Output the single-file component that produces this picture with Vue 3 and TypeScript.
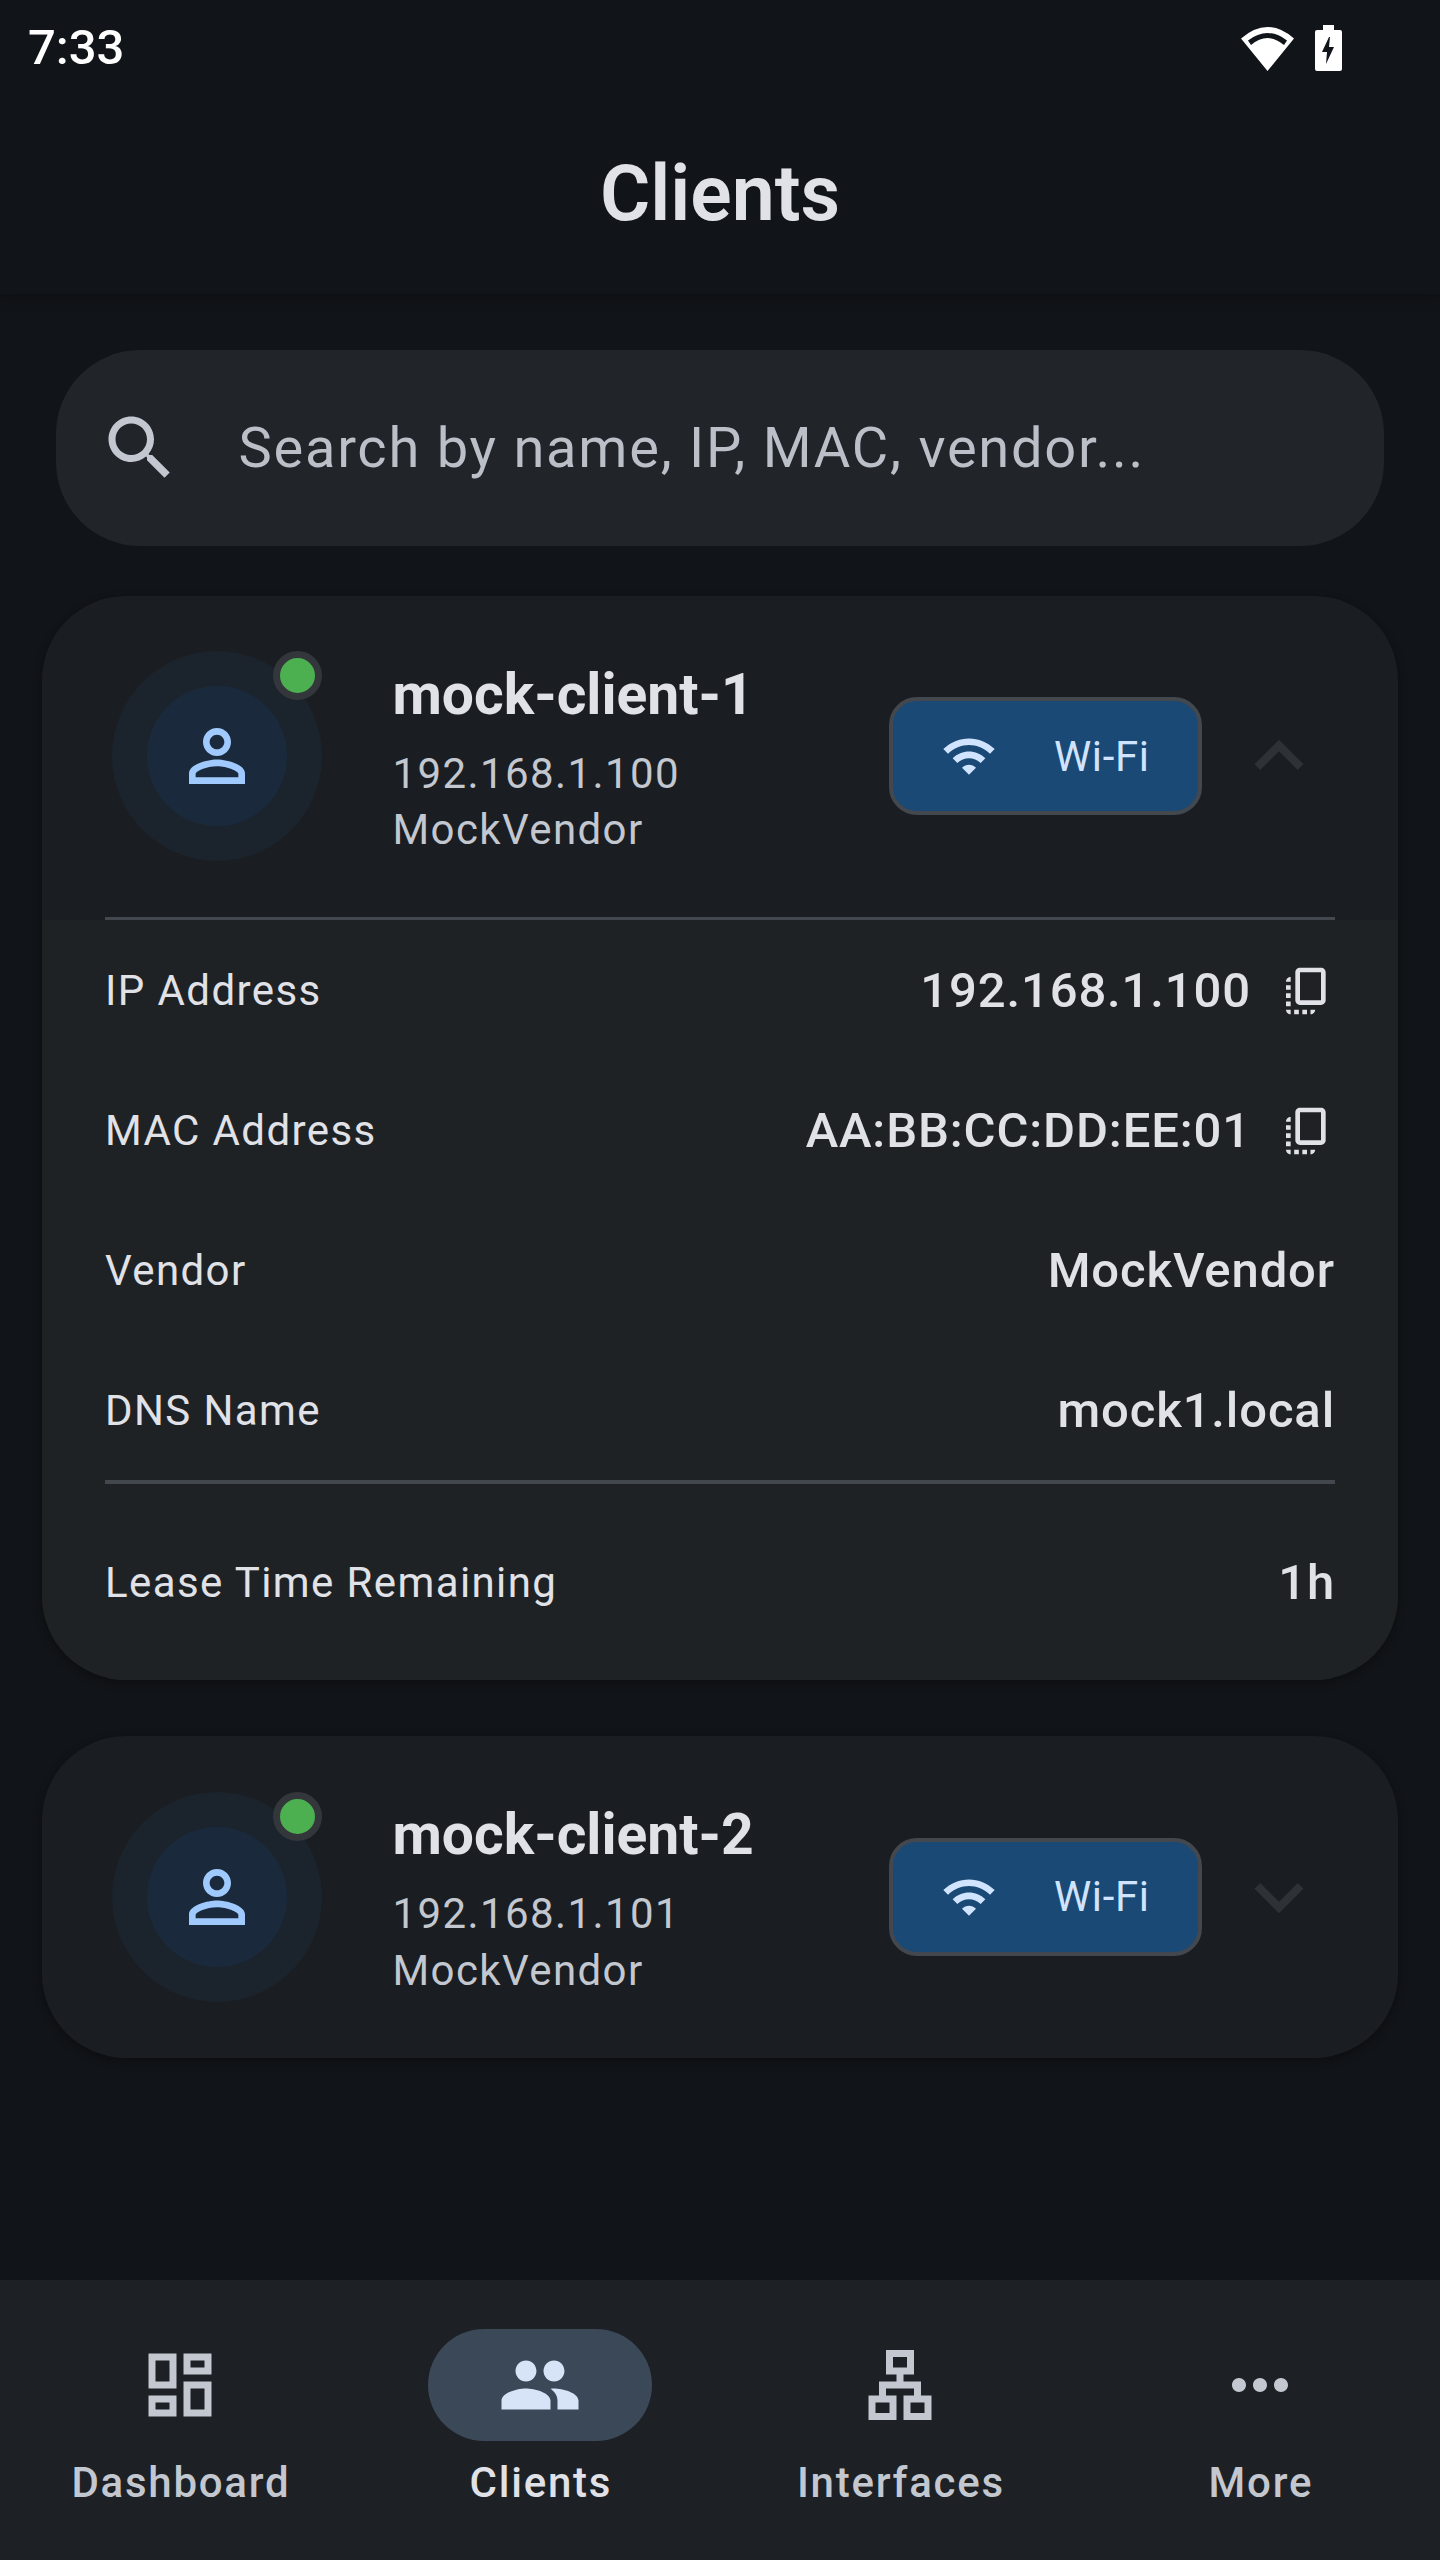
<script setup lang="ts">
import { ref } from 'vue'

interface Client {
  name: string
  ip: string
  vendor: string
  mac: string
  dns: string
  lease: string
}

const clients = ref<Client[]>([
  { name: 'mock-client-1', ip: '192.168.1.100', vendor: 'MockVendor', mac: 'AA:BB:CC:DD:EE:01', dns: 'mock1.local', lease: '1h' },
  { name: 'mock-client-2', ip: '192.168.1.101', vendor: 'MockVendor', mac: 'AA:BB:CC:DD:EE:02', dns: 'mock2.local', lease: '2h' }
])
const opened = ref(0)

const toggle = (index: number) => {
  opened.value = opened.value === index ? -1 : index
}

const tabs = [
  { label: 'Dashboard', icon: 'M19 5v2h-4V5h4M9 5v6H5V5h4m10 8v6h-4v-6h4M9 17v2H5v-2h4M21 3h-8v6h8V3zM11 3H3v10h8V3zm10 8h-8v10h8V11zm-10 4H3v6h8v-6z' },
  { label: 'Clients', icon: 'M16 11c1.66 0 2.99-1.34 2.99-3S17.66 5 16 5c-1.66 0-3 1.34-3 3s1.34 3 3 3zm-8 0c1.66 0 2.99-1.34 2.99-3S9.66 5 8 5C6.34 5 5 6.34 5 8s1.34 3 3 3zm0 2c-2.33 0-7 1.17-7 3.5V19h14v-2.5c0-2.33-4.67-3.5-7-3.5zm8 0c-.29 0-.62.02-.97.05 1.16.84 1.97 1.97 1.97 3.45V19h6v-2.5c0-2.33-4.67-3.5-7-3.5z' },
  { label: 'Interfaces', icon: 'M13 22h8v-7h-3v-4h-5V9h3V2H8v7h3v2H6v4H3v7h8v-7H8v-2h8v2h-3v7zM10 7V4h4v3h-4zM5 20v-3h4v3H5zm14 0h-4v-3h4v3z' },
  { label: 'More', icon: 'M6 10c-1.1 0-2 .9-2 2s.9 2 2 2 2-.9 2-2-.9-2-2-2zm12 0c-1.1 0-2 .9-2 2s.9 2 2 2 2-.9 2-2-.9-2-2-2zm-6 0c-1.1 0-2 .9-2 2s.9 2 2 2 2-.9 2-2-.9-2-2-2z' }
]
const activeTab = ref(1)

const copyPath = 'M18 2H9C7.9 2 7 2.9 7 4v12c0 1.1.9 2 2 2h9c1.1 0 2-.9 2-2V4C20 2.9 19.1 2 18 2zM18 16H9V4h9V16zM3 15v-2h2v2H3zM3 9.5h2v2H3V9.5zM10 20h2v2h-2V20zM3 18.5v-2h2v2H3zM5 22c-1.1 0-2-.9-2-2h2V22zM8.5 22h-2v-2h2V22zM13.5 22L13.5 22l0-2h2v0C15.5 21.1 14.6 22 13.5 22zM5 6L5 6l0 2h0H3v0C3 6.9 3.9 6 5 6z'
</script>

<template>
  <div class="screen">
    <header class="appbar">
      <div class="status">
        <span class="time">7:33</span>
        <div class="status-icons">
          <svg class="st-wifi" viewBox="0 0 53 44">
            <path fill="#fff" fill-rule="evenodd" d="M26.5 44 0 11.5Q26.5-11.5 53 11.5ZM7 13.5 10 18Q26.5 4 43 18L46 13.5Q26.5-1.500 7 13.5Z" />
          </svg>
          <svg class="st-batt" viewBox="0 0 27 46">
            <path fill="#fff" fill-rule="evenodd" d="M7 0h12v5h6a2 2 0 0 1 2 2v37a2 2 0 0 1-2 2H2a2 2 0 0 1-2-2V7a2 2 0 0 1 2-2h6V0ZM14 12 7 27h5l-1 12 8-17h-5l1-10Z" />
          </svg>
        </div>
      </div>
      <h1 class="title">Clients</h1>
    </header>

    <div class="search">
      <svg class="search-icon" viewBox="0 0 24 24">
        <path d="M15.500 14h-.79l-.28-.27C15.410 12.590 16 11.110 16 9.500 16 5.910 13.090 3 9.500 3S3 5.910 3 9.500 5.910 16 9.500 16c1.610 0 3.090-.59 4.230-1.570l.27.28v.79l5 4.990L20.490 19l-4.990-5zm-6 0C7.010 14 5 11.990 5 9.500S7.010 5 9.500 5 14 7.010 14 9.500 11.990 14 9.500 14z" />
      </svg>
      <span class="placeholder">Search by name, IP, MAC, vendor...</span>
    </div>

    <main class="list">
      <section v-for="(client, index) in clients" :key="client.name" class="card">
        <div class="card-head" :class="{ open: opened === index }" @click="toggle(index)">
          <div class="avatar">
            <div class="avatar-inner">
              <svg viewBox="0 0 24 24">
                <path d="M12 5.900c1.160 0 2.100.94 2.100 2.100s-.94 2.100-2.100 2.100S9.900 9.160 9.900 8s.94-2.100 2.100-2.100m0 9c2.970 0 6.100 1.460 6.100 2.100v1.100H5.900V17c0-.64 3.130-2.100 6.100-2.100M12 4C9.790 4 8 5.790 8 8s1.790 4 4 4 4-1.790 4-4-1.790-4-4-4zm0 9c-2.670 0-8 1.340-8 4v3h16v-3c0-2.660-5.330-4-8-4z" />
              </svg>
            </div>
            <span class="online"></span>
          </div>
          <div class="info">
            <div class="name">{{ client.name }}</div>
            <div class="sub">{{ client.ip }}</div>
            <div class="sub">{{ client.vendor }}</div>
          </div>
          <div class="chip">
            <svg viewBox="0 0 24 24">
              <path d="M1 9l2 2c4.970-4.970 13.030-4.970 18 0l2-2C16.930 2.930 7.080 2.930 1 9zm8 8l3 3 3-3c-1.650-1.660-4.340-1.660-6 0zm-4-4l2 2c2.760-2.760 7.240-2.760 10 0l2-2C15.140 9.140 8.870 9.140 5 13z" />
            </svg>
            <span>Wi-Fi</span>
          </div>
          <svg class="chevron" viewBox="0 0 24 24">
            <path v-if="opened === index" d="M12 8l-6 6 1.410 1.410L12 10.830l4.590 4.580L18 14z" />
            <path v-else d="M16.590 8.590L12 13.170 7.410 8.590 6 10l6 6 6-6z" />
          </svg>
        </div>
        <div v-if="opened === index" class="rule"></div>
        <div v-if="opened === index" class="details">
          <div class="row">
            <span class="label">IP Address</span>
            <div class="value-wrap">
              <span class="value">{{ client.ip }}</span>
              <svg class="copy" viewBox="0 0 24 24"><path :d="copyPath" /></svg>
            </div>
          </div>
          <div class="row">
            <span class="label">MAC Address</span>
            <div class="value-wrap">
              <span class="value">{{ client.mac }}</span>
              <svg class="copy" viewBox="0 0 24 24"><path :d="copyPath" /></svg>
            </div>
          </div>
          <div class="row">
            <span class="label">Vendor</span>
            <span class="value">{{ client.vendor }}</span>
          </div>
          <div class="row">
            <span class="label">DNS Name</span>
            <span class="value">{{ client.dns }}</span>
          </div>
          <div class="rule rule-inner"></div>
          <div class="row">
            <span class="label">Lease Time Remaining</span>
            <span class="value">{{ client.lease }}</span>
          </div>
        </div>
      </section>
    </main>

    <nav class="nav">
      <div v-for="(tab, index) in tabs" :key="tab.label" class="tab" :class="{ active: activeTab === index }" @click="activeTab = index">
        <div class="pill">
          <svg viewBox="0 0 24 24"><path :d="tab.icon" /></svg>
        </div>
        <span class="tab-label">{{ tab.label }}</span>
      </div>
    </nav>
  </div>
</template>

<style>
html, body {
  margin: 0;
  background: #111418;
}
</style>

<style scoped>
* {
  box-sizing: border-box;
}
.screen {
  width: 1440px;
  height: 2560px;
  display: flex;
  flex-direction: column;
  background: #111418;
  font-family: Roboto, "Liberation Sans", sans-serif;
  color: #e1e2e8;
}
.appbar {
  height: 294px;
  flex: none;
  box-shadow: 0 4px 14px rgba(0, 0, 0, 0.22);
}
.status {
  height: 84px;
  padding: 0 98px 0 28px;
  display: flex;
  align-items: center;
  justify-content: space-between;
}
.time {
  font-size: 49px;
  font-weight: 500;
  line-height: 56px;
  color: #fff;
  margin-top: 12px;
}
.status-icons {
  display: flex;
  gap: 21px;
  align-items: flex-start;
  margin-top: 12px;
  align-self: flex-start;
}
.st-wifi {
  width: 53px;
  height: 44px;
  margin-top: 15px;
}
.st-batt {
  width: 27px;
  height: 46px;
  margin-top: 13px;
}
.title {
  margin: 0;
  height: 210px;
  padding-top: 5px;
  line-height: 210px;
  text-align: center;
  font-size: 77px;
  font-weight: 600;
}
.search {
  height: 196px;
  margin: 56px 56px 0;
  padding-left: 42px;
  border-radius: 84px;
  background: #212429;
  display: flex;
  align-items: center;
  flex: none;
}
.search-icon {
  width: 84px;
  height: 84px;
  fill: #c3c7cf;
  margin-right: 56.5px;
}
.placeholder {
  font-size: 56px;
  letter-spacing: 1.75px;
  color: #bbbfc8;
}
.list {
  flex: 1;
  padding: 50px 42px 0;
  display: flex;
  flex-direction: column;
  gap: 56px;
}
.card {
  border-radius: 84px;
  background: #1a1d21;
  overflow: hidden;
  box-shadow: 0 3px 10px rgba(0, 0, 0, 0.3);
}
.card-head {
  height: 322.5px;
  padding: 0 70px;
  display: flex;
  align-items: center;
}
.card-head.open {
  height: 320.5px;
}
.avatar {
  position: relative;
  width: 210px;
  height: 210px;
  flex: none;
  border-radius: 50%;
  background: #1b242c;
  display: flex;
  align-items: center;
  justify-content: center;
}
.avatar-inner {
  width: 140px;
  height: 140px;
  border-radius: 50%;
  background: #1a2a3c;
  display: flex;
  align-items: center;
  justify-content: center;
}
.avatar-inner svg {
  width: 84px;
  height: 84px;
  fill: #a0cafd;
}
.online {
  position: absolute;
  top: 0;
  right: 0;
  width: 49px;
  height: 49px;
  border-radius: 50%;
  background: #4caf50;
  border: 7px solid #33363b;
}
.info {
  flex: 1;
  min-width: 0;
  margin-left: 70.5px;
  padding-bottom: 11px;
}
.name {
  font-size: 57px;
  line-height: 103px;
  font-weight: 700;
}
.sub {
  font-size: 42px;
  line-height: 56.5px;
  letter-spacing: 1.4px;
  color: #c3c7cf;
}
.chip {
  width: 313px;
  height: 118px;
  flex: none;
  margin-right: 28px;
  border: 4px solid #43474e;
  border-radius: 28px;
  background: #1a4975;
  color: #d1e4ff;
  display: flex;
  align-items: center;
  padding-left: 48px;
  gap: 57px;
  font-size: 42px;
  font-weight: 400;
  letter-spacing: 0.6px;
}
.chip svg {
  width: 56px;
  height: 56px;
  fill: #d1e4ff;
}
.chevron {
  width: 98px;
  height: 98px;
  flex: none;
  fill: #2e3237;
}
.rule {
  height: 3.5px;
  margin: 0 63px;
  background: #43474e;
}
.details {
  background: #1e2225;
  padding: 0 63px 28px;
}
.rule-inner {
  margin: 0 0 28px;
}
.row {
  height: 140px;
  padding-top: 1px;
  display: flex;
  align-items: center;
  justify-content: space-between;
}
.label {
  font-size: 42px;
  letter-spacing: 1.4px;
  color: #e1e2e8;
}
.value-wrap {
  display: flex;
  align-items: center;
  gap: 28px;
}
.value {
  font-size: 49px;
  font-weight: 500;
  letter-spacing: 0.875px;
  color: #e1e2e8;
}
.copy {
  width: 56px;
  height: 56px;
  fill: #e1e2e8;
}
.nav {
  height: 280px;
  flex: none;
  display: flex;
  background: #1d2024;
}
.tab {
  width: 360px;
  display: flex;
  flex-direction: column;
  align-items: center;
  padding-top: 49px;
}
.pill {
  width: 224px;
  height: 112px;
  border-radius: 56px;
  display: flex;
  align-items: center;
  justify-content: center;
}
.pill svg {
  width: 84px;
  height: 84px;
  fill: #c3c7cf;
}
.tab-label {
  margin-top: 14px;
  margin-left: 1.75px;
  font-size: 42px;
  line-height: 56px;
  font-weight: 500;
  letter-spacing: 1.75px;
  color: #c3c7cf;
}
.tab.active .pill {
  background: #3b4858;
}
.tab.active .pill svg {
  fill: #d7e3f7;
}
.tab.active .tab-label {
  color: #e1e2e8;
}
</style>
